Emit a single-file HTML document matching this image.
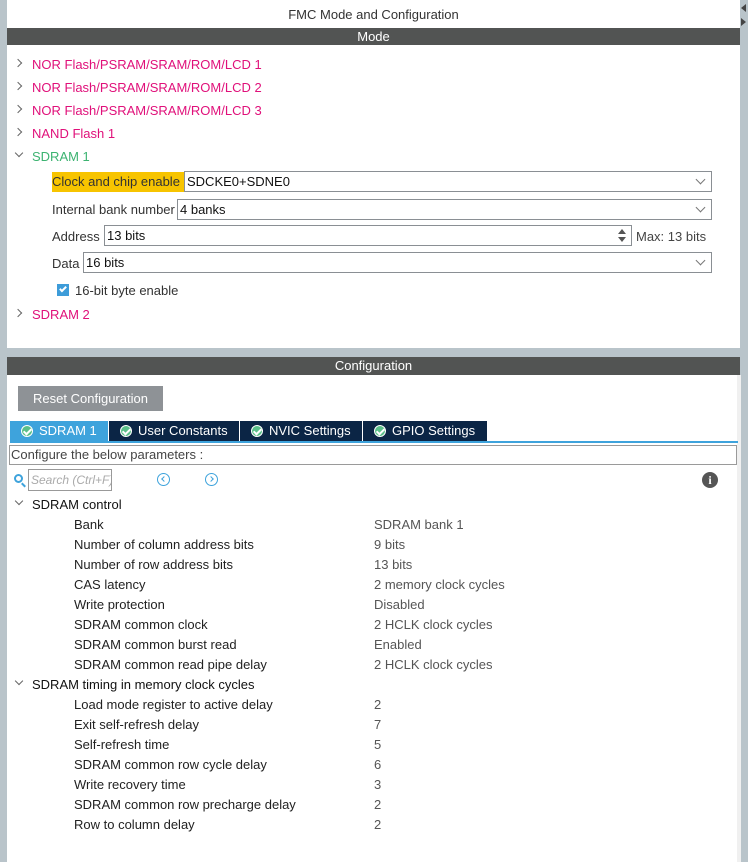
<!DOCTYPE html>
<html><head><meta charset="utf-8"><style>
*{margin:0;padding:0;box-sizing:border-box}
body{width:752px;height:862px;position:relative;background:#fff;font-family:"Liberation Sans",Arial,sans-serif;font-size:13px;color:#222;overflow:hidden}
.a{position:absolute;white-space:nowrap}
.bar{position:absolute;left:7px;width:733px;background:#525453;color:#fff;text-align:center;font-size:13px}
.pink{color:#e0107a}
.chev{position:absolute;width:6px;height:6px;border-right:1px solid #666;border-bottom:1px solid #666}
.r{transform:rotate(-45deg)}
.d{transform:rotate(45deg)}
.box{position:absolute;border:1px solid #8a8f94;background:#fff;padding-left:2px;line-height:20px;font-size:13px;color:#111}
.dd{position:absolute;width:7px;height:7px;border-right:1px solid #777;border-bottom:1px solid #777;transform:rotate(45deg)}
.tab{position:absolute;top:421px;height:20px;background:#0b2545;color:#fff;font-size:13px;line-height:20px;padding-left:29px}
.ck{position:absolute;left:11px;top:4px;width:12px;height:12px;border-radius:50%;background:#5bc08a;border:1px solid #fff}
.ck:after{content:"";position:absolute;left:3px;top:1px;width:3px;height:6px;border-right:2px solid #fff;border-bottom:2px solid #fff;transform:rotate(45deg)}
.l{position:absolute;left:74px;color:#222}
.v{position:absolute;left:374px;color:#555}
.circ{position:absolute;top:473px;width:13px;height:13px;border:1.5px solid #3ea3dc;border-radius:50%}
</style></head><body>
<div class="a" style="left:0;top:0;width:7px;height:862px;background:#b9c4ca"></div>
<div class="a" style="left:740px;top:0;width:8px;height:862px;background:#b9c4ca"></div>
<div class="a" style="left:737px;top:375px;width:4px;height:487px;background:#f0f0f0"></div>
<div class="a" style="left:741px;top:4px;width:0;height:0;border-top:4px solid transparent;border-bottom:4px solid transparent;border-right:5px solid #444"></div>
<div class="a" style="left:741px;top:18px;width:0;height:0;border-top:4px solid transparent;border-bottom:4px solid transparent;border-left:5px solid #444"></div>

<div class="a" style="left:7px;width:733px;top:7px;text-align:center;color:#333">FMC Mode and Configuration</div>
<div class="bar" style="top:28px;height:17px;line-height:17px">Mode</div>

<div class="chev r" style="left:15px;top:60px"></div><div class="a pink" style="left:32px;top:57px">NOR Flash/PSRAM/SRAM/ROM/LCD 1</div>
<div class="chev r" style="left:15px;top:83px"></div><div class="a pink" style="left:32px;top:80px">NOR Flash/PSRAM/SRAM/ROM/LCD 2</div>
<div class="chev r" style="left:15px;top:106px"></div><div class="a pink" style="left:32px;top:103px">NOR Flash/PSRAM/SRAM/ROM/LCD 3</div>
<div class="chev r" style="left:15px;top:129px"></div><div class="a pink" style="left:32px;top:126px">NAND Flash 1</div>
<div class="chev d" style="left:16px;top:150px"></div><div class="a" style="left:32px;top:149px;color:#3cb371">SDRAM 1</div>

<div class="a" style="left:52px;top:172px;width:132px;height:20px;background:#f7c400;line-height:20px;color:#333">Clock and chip enable</div>
<div class="box" style="left:184px;top:171px;width:528px;height:21px">SDCKE0+SDNE0</div><div class="dd" style="left:697px;top:176px"></div>

<div class="a" style="left:52px;top:202px;color:#333">Internal bank number</div>
<div class="box" style="left:177px;top:199px;width:535px;height:21px">4 banks</div><div class="dd" style="left:697px;top:204px"></div>

<div class="a" style="left:52px;top:229px;color:#333">Address</div>
<div class="box" style="left:104px;top:225px;width:528px;height:21px">13 bits</div>
<div class="a" style="left:618px;top:229px;width:0;height:0;border-left:4px solid transparent;border-right:4px solid transparent;border-bottom:5px solid #555"></div>
<div class="a" style="left:618px;top:237px;width:0;height:0;border-left:4px solid transparent;border-right:4px solid transparent;border-top:5px solid #555"></div>
<div class="a" style="left:636px;top:229px;color:#444">Max: 13 bits</div>

<div class="a" style="left:52px;top:256px;color:#333">Data</div>
<div class="box" style="left:83px;top:252px;width:629px;height:21px">16 bits</div><div class="dd" style="left:697px;top:257px"></div>

<div class="a" style="left:57px;top:284px;width:12px;height:12px;background:#3d9cd9"></div>
<div class="a" style="left:61px;top:285px;width:4px;height:7px;border-right:2px solid #fff;border-bottom:2px solid #fff;transform:rotate(45deg)"></div>
<div class="a" style="left:75px;top:283px;color:#333">16-bit byte enable</div>
<div class="chev r" style="left:15px;top:310px"></div><div class="a pink" style="left:32px;top:307px">SDRAM 2</div>

<div class="a" style="left:0;top:348px;width:748px;height:9px;background:#b9c4ca"></div>
<div class="bar" style="top:357px;height:18px;line-height:18px">Configuration</div>

<div class="a" style="left:18px;top:386px;width:145px;height:25px;background:#8e9296;color:#fff;line-height:25px;text-align:center">Reset Configuration</div>

<div class="tab" style="left:10px;width:98px;background:#3ea3dc"><span class="ck"></span>SDRAM 1</div>
<div class="tab" style="left:109px;width:130px"><span class="ck"></span>User Constants</div>
<div class="tab" style="left:240px;width:122px"><span class="ck"></span>NVIC Settings</div>
<div class="tab" style="left:363px;width:124px"><span class="ck"></span>GPIO Settings</div>
<div class="a" style="left:10px;top:441px;width:728px;height:2px;background:#3ea3dc"></div>

<div class="a" style="left:9px;top:445px;width:728px;height:20px;border:1px solid #9a9a9a;line-height:18px;padding-left:1px;color:#444">Configure the below parameters :</div>

<div class="a" style="left:14px;top:474px;width:9px;height:9px;border:2px solid #3ea3dc;border-radius:50%"></div>
<div class="a" style="left:21px;top:484px;width:5px;height:2px;background:#3ea3dc;transform:rotate(45deg)"></div>
<div class="a" style="left:28px;top:469px;width:84px;height:22px;border:1px solid #999;font-style:italic;color:#aaa;line-height:20px;padding-left:2px;font-size:12px;overflow:hidden">Search (Ctrl+F)</div>
<div class="circ" style="left:157px"></div><div class="a" style="left:162px;top:477px;width:4px;height:4px;border-left:1.5px solid #3ea3dc;border-bottom:1.5px solid #3ea3dc;transform:rotate(45deg)"></div>
<div class="circ" style="left:205px"></div><div class="a" style="left:209px;top:477px;width:4px;height:4px;border-right:1.5px solid #3ea3dc;border-top:1.5px solid #3ea3dc;transform:rotate(45deg)"></div>
<div class="a" style="left:702px;top:472px;width:16px;height:16px;border-radius:50%;background:#555;color:#fff;font-weight:bold;font-family:'Liberation Serif',serif;font-size:12px;line-height:16px;text-align:center">i</div>

<div class="chev d" style="left:16px;top:498px"></div><div class="a" style="left:32px;top:497px;color:#111">SDRAM control</div>
<div class="l" style="top:517px">Bank</div><div class="v" style="top:517px">SDRAM bank 1</div>
<div class="l" style="top:537px">Number of column address bits</div><div class="v" style="top:537px">9 bits</div>
<div class="l" style="top:557px">Number of row address bits</div><div class="v" style="top:557px">13 bits</div>
<div class="l" style="top:577px">CAS latency</div><div class="v" style="top:577px">2 memory clock cycles</div>
<div class="l" style="top:597px">Write protection</div><div class="v" style="top:597px">Disabled</div>
<div class="l" style="top:617px">SDRAM common clock</div><div class="v" style="top:617px">2 HCLK clock cycles</div>
<div class="l" style="top:637px">SDRAM common burst read</div><div class="v" style="top:637px">Enabled</div>
<div class="l" style="top:657px">SDRAM common read pipe delay</div><div class="v" style="top:657px">2 HCLK clock cycles</div>
<div class="chev d" style="left:16px;top:678px"></div><div class="a" style="left:32px;top:677px;color:#111">SDRAM timing in memory clock cycles</div>
<div class="l" style="top:697px">Load mode register to active delay</div><div class="v" style="top:697px">2</div>
<div class="l" style="top:717px">Exit self-refresh delay</div><div class="v" style="top:717px">7</div>
<div class="l" style="top:737px">Self-refresh time</div><div class="v" style="top:737px">5</div>
<div class="l" style="top:757px">SDRAM common row cycle delay</div><div class="v" style="top:757px">6</div>
<div class="l" style="top:777px">Write recovery time</div><div class="v" style="top:777px">3</div>
<div class="l" style="top:797px">SDRAM common row precharge delay</div><div class="v" style="top:797px">2</div>
<div class="l" style="top:817px">Row to column delay</div><div class="v" style="top:817px">2</div>
</body></html>
